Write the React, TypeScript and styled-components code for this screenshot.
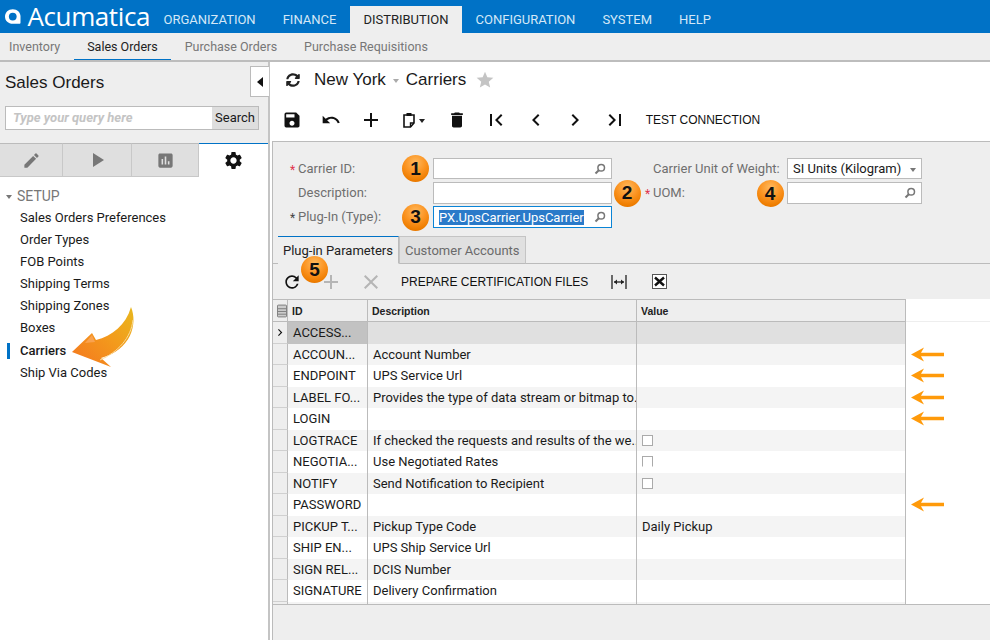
import styled, { createGlobalStyle } from "styled-components";
import {
    MdAdd,
    MdAssessment,
    MdChevronLeft,
    MdChevronRight,
    MdClose,
    MdDelete,
    MdEdit,
    MdFirstPage,
    MdLastPage,
    MdPlayArrow,
    MdRefresh,
    MdSave,
    MdSettings,
    MdStar,
    MdUndo,
} from "react-icons/md";
import { FaSyncAlt } from "react-icons/fa";

const COLORS = {
    blue: "#0072c6",
    panel: "#eeeeee",
    line: "#bbbbbb",
    text: "#1a1a1a",
    label: "#6f6f6f",
    stripe: "#f4f4f4",
};

const GlobalStyle = createGlobalStyle`
    * {
        box-sizing: border-box;
    }

    html, body {
        margin: 0;
        padding: 0;
        background: #fff;
        font-family: Roboto, "Liberation Sans", sans-serif;
        font-size: 13px;
        color: ${COLORS.text};
    }
`;

const Page = styled.div`
    position: relative;
    display: flex;
    flex-direction: column;
    width: 990px;
    height: 640px;
    overflow: hidden;
`;

const TopBar = styled.header`
    display: flex;
    align-items: flex-end;
    height: 33px;
    background: ${COLORS.blue};
`;

const LogoBox = styled.div`
    display: flex;
    align-items: center;
    gap: 7px;
    width: 150px;
    height: 33px;
    padding-left: 5px;
    color: #fff;
`;

const LogoText = styled.span`
    font-family: "Open Sans", sans-serif;
    font-size: 26px;
    line-height: 33px;
    letter-spacing: -0.4px;
`;

const TopTab = styled.div<{ $active?: boolean }>`
    display: flex;
    align-items: center;
    justify-content: center;
    height: 27px;
    padding: 0 13.5px;
    font-size: 13px;
    background: ${(p) => (p.$active ? COLORS.panel : "transparent")};
    color: ${(p) => (p.$active ? "#222" : "#d4e8f7")};
`;

const SubNav = styled.nav`
    display: flex;
    height: 29px;
    padding-left: 0;
    background: ${COLORS.panel};
    border-bottom: 2px solid #bdbdbd;
`;

const SubTab = styled.div<{ $active?: boolean; $first?: boolean }>`
    display: flex;
    align-items: center;
    height: 27px;
    padding: 0 13.5px;
    padding-left: ${(p) => (p.$first ? "9px" : "13.5px")};
    font-size: 12.5px;
    color: ${(p) => (p.$active ? "#222" : "#777")};
    border-bottom: ${(p) => (p.$active ? `1px solid ${COLORS.blue}` : "none")};
`;

const Body = styled.div`
    display: flex;
    flex: 1;
    min-height: 0;
`;

const Sidebar = styled.aside`
    position: relative;
    display: flex;
    flex-direction: column;
    width: 270px;
    border-right: 2px solid #c4c4c4;
`;

const SideHead = styled.div`
    display: flex;
    flex-direction: column;
    height: 81px;
    padding: 10px 9px 0 5px;
    background: ${COLORS.panel};
`;

const SideTitle = styled.div`
    height: 24px;
    font-family: "Liberation Sans", sans-serif;
    font-size: 17px;
    line-height: 22px;
`;

const SearchBox = styled.div`
    display: flex;
    height: 24px;
    margin-top: 10px;
    background: #fff;
    border: 1px solid ${COLORS.line};
`;

const SearchHint = styled.div`
    flex: 1;
    padding-left: 7px;
    font-size: 13px;
    font-style: italic;
    font-weight: 700;
    line-height: 22px;
    color: #c4c4c4;
`;

const SearchButton = styled.div`
    width: 46px;
    font-size: 13px;
    line-height: 22px;
    text-align: center;
    background: #dedede;
`;

const Collapse = styled.div`
    position: absolute;
    top: 4px;
    right: -1px;
    display: flex;
    align-items: center;
    justify-content: center;
    width: 19px;
    height: 31px;
    background: #fff;
    border: 1px solid ${COLORS.line};
    border-right: none;
`;

const CollapseArrow = styled.span`
    width: 0;
    height: 0;
    border-top: 5px solid transparent;
    border-bottom: 5px solid transparent;
    border-right: 6px solid #111;
`;

const ModeTabs = styled.div`
    display: flex;
    height: 34px;
    background: #fff;
`;

const ModeTab = styled.div<{ $active?: boolean; $width: number }>`
    display: flex;
    align-items: center;
    justify-content: center;
    width: ${(p) => p.$width}px;
    font-size: 19px;
    color: ${(p) => (p.$active ? "#111" : "#777")};
    background: ${(p) => (p.$active ? "#fff" : "#dfdfdf")};
    border-top: 1px solid ${(p) => (p.$active ? COLORS.blue : COLORS.line)};
    border-right: ${(p) => (p.$active ? "none" : `1px solid #c8c8c8`)};
    border-bottom: ${(p) => (p.$active ? "none" : `1px solid #c8c8c8`)};
`;

const MenuList = styled.div`
    display: flex;
    flex-direction: column;
    padding-top: 8px;
`;

const MenuGroup = styled.div`
    display: flex;
    align-items: center;
    gap: 5px;
    height: 22px;
    padding-left: 6px;
    font-size: 14px;
    color: #777;
`;

const Caret = styled.span<{ $color?: string }>`
    width: 0;
    height: 0;
    margin-top: 2px;
    border-left: 3.5px solid transparent;
    border-right: 3.5px solid transparent;
    border-top: 4px solid ${(p) => p.$color || "#777"};
`;

const MenuItem = styled.div<{ $active?: boolean }>`
    position: relative;
    height: 22.1px;
    padding-left: 20px;
    font-size: 13px;
    line-height: 22px;
    font-weight: ${(p) => (p.$active ? 500 : 400)};

    &::before {
        content: "";
        display: ${(p) => (p.$active ? "block" : "none")};
        position: absolute;
        left: 7px;
        top: 3px;
        width: 3px;
        height: 16px;
        background: ${COLORS.blue};
    }
`;

const Main = styled.main`
    display: flex;
    flex: 1;
    flex-direction: column;
    min-width: 0;
`;

const TitleBar = styled.div`
    display: flex;
    align-items: center;
    height: 36px;
    padding-left: 16px;
    font-family: "Liberation Sans", sans-serif;
    font-size: 17px;
`;

const SyncIcon = styled.span`
    display: flex;
    margin-right: 14px;
    font-size: 14px;
    color: #222;
`;

const StarIcon = styled.span`
    display: flex;
    margin-left: 9px;
    font-size: 20px;
    color: #c4c4c4;
`;

const Toolbar = styled.div`
    display: flex;
    align-items: center;
    height: 43px;
    padding-left: 2px;
`;

const ToolButton = styled.div<{ $width?: number; $muted?: boolean; $size?: number }>`
    display: flex;
    align-items: center;
    justify-content: center;
    gap: 4px;
    width: ${(p) => p.$width || 39.6}px;
    font-size: ${(p) => p.$size || 20}px;
    color: ${(p) => (p.$muted ? "#b5b5b5" : "#111")};
`;

const ToolText = styled.div`
    padding-left: 11px;
    font-family: "Liberation Sans", sans-serif;
    font-size: 12px;
    color: #111;
`;

const FormPanel = styled.section`
    display: flex;
    flex: 1;
    flex-direction: column;
    min-height: 0;
    margin-left: 2px;
    background: ${COLORS.panel};
    border-top: 1px solid ${COLORS.line};
    border-left: 1px solid ${COLORS.line};
`;

const FormGrid = styled.div`
    display: grid;
    grid-template-columns: 8px 135px 179px 33px 8px 134px 135px;
    grid-auto-rows: 22px;
    row-gap: 2px;
    height: 94px;
    padding: 16px 0 0 17px;
`;

const Req = styled.span<{ $dark?: boolean }>`
    font-size: 12px;
    line-height: 24px;
    color: ${(p) => (p.$dark ? "#444" : "#e0324b")};
`;

const Label = styled.label`
    font-size: 13px;
    line-height: 21px;
    color: ${COLORS.label};
`;

const InputBox = styled.div<{ $focus?: boolean; $short?: boolean }>`
    display: flex;
    align-items: center;
    justify-content: space-between;
    height: ${(p) => (p.$short ? "21px" : "22px")};
    padding: 0 5px;
    font-size: 13px;
    background: #fff;
    border: 1px solid ${(p) => (p.$focus ? "#0a84d6" : COLORS.line)};
`;

const Selected = styled.span`
    padding: 0 0 0 0;
    color: #fff;
    background: #2a7ac9;
`;

const Gap = styled.div``;

const TabStrip = styled.div`
    display: flex;
    height: 28px;
    padding-left: 5px;
    border-bottom: 1px solid ${COLORS.line};
`;

const PanelTab = styled.div<{ $active?: boolean }>`
    display: flex;
    align-items: center;
    height: 28px;
    padding: 0 5px;
    font-size: 13px;
    color: ${(p) => (p.$active ? "#222" : "#6a6a6a")};
    background: ${(p) => (p.$active ? COLORS.panel : "#e0e0e0")};
    border: 1px solid ${(p) => (p.$active ? COLORS.line : "#c4c4c4")};
    border-top: 1px solid ${(p) => (p.$active ? COLORS.blue : "#c4c4c4")};
    border-bottom: ${(p) => (p.$active ? `1px solid ${COLORS.panel}` : `1px solid ${COLORS.line}`)};
    border-left: ${(p) => (p.$active ? "none" : undefined)};
`;

const GridBar = styled.div`
    display: flex;
    align-items: center;
    height: 36px;
    padding-left: 0;
    border-bottom: 1px solid ${COLORS.line};
`;

const GridHead = styled.div`
    display: flex;
    width: 633px;
    height: 22px;
    border-bottom: 1px solid ${COLORS.line};
`;

const HeadCell = styled.div<{ $width: number }>`
    display: flex;
    align-items: center;
    width: ${(p) => p.$width}px;
    padding-left: 4px;
    font-family: "Liberation Sans", sans-serif;
    font-size: 10.5px;
    font-weight: 700;
    color: #222;
    border-right: 1px solid ${COLORS.line};
`;

const HeadWhite = styled.div`
    position: absolute;
    left: 906px;
    top: 299px;
    width: 84px;
    height: 22px;
    background: #fff;
`;

const GridBody = styled.div`
    display: flex;
    flex-direction: column;
    height: 283px;
    background: #fff;
    overflow: hidden;
    border-bottom: 1px solid ${COLORS.line};
`;

const Row = styled.div`
    display: flex;
    flex: none;
    height: 21.5px;
`;

const RowHead = styled.div`
    display: flex;
    align-items: center;
    justify-content: center;
    width: 15px;
    font-size: 15px;
    color: #111;
    background: ${COLORS.panel};
    border-right: 1px solid ${COLORS.line};
    border-bottom: 1px solid #d0d0d0;
`;

const Cell = styled.div<{ $width: number; $tone: string }>`
    display: flex;
    align-items: center;
    width: ${(p) => p.$width}px;
    padding-left: 5px;
    font-size: 13px;
    white-space: nowrap;
    overflow: hidden;
    background: ${(p) => p.$tone};
    border-right: 1px solid ${COLORS.line};
`;

const Check = styled.span<{ $open?: boolean }>`
    width: 11px;
    height: 11px;
    background: #fff;
    border: 1px solid #aaa;
    border-bottom-color: ${(p) => (p.$open ? "transparent" : "#aaa")};
`;

const RowHint = styled.div`
    display: flex;
    align-items: center;
    padding-left: 5px;
`;

const Badge = styled.div<{ $x: number; $y: number }>`
    position: absolute;
    left: ${(p) => p.$x - 13.5}px;
    top: ${(p) => p.$y - 13.5}px;
    display: flex;
    align-items: center;
    justify-content: center;
    width: 27px;
    height: 27px;
    font-family: "Liberation Sans", sans-serif;
    font-size: 19px;
    font-weight: 700;
    color: #111;
    border-radius: 50%;
    background: radial-gradient(circle at 50% 28%, #ffb95e 0%, #fb9320 45%, #ee7d00 75%, #d96c00 100%);
`;

const BigArrow = styled.svg`
    position: absolute;
    left: 70px;
    top: 305px;
    width: 68px;
    height: 64px;
`;

function SearchGlass() {
    return (
        <svg width="12" height="12" viewBox="0 0 12 12">
            <circle cx="7.2" cy="4.8" r="3.3" fill="none" stroke="#777" strokeWidth="1.5" />
            <path d="M4.8 7.2 L1.5 10.5" stroke="#777" strokeWidth="2" />
        </svg>
    );
}

function ClipboardIcon() {
    return (
        <svg width="12" height="16" viewBox="0 0 12 16">
            <path d="M1 3 H11 V11 L7.5 15 H1 Z" fill="none" stroke="#111" strokeWidth="1.6" />
            <path d="M3.5 1 H8.5 V4 H3.5 Z" fill="#111" />
            <path d="M7.5 15 V11 H11" fill="none" stroke="#111" strokeWidth="1.4" />
        </svg>
    );
}

function FitIcon() {
    return (
        <svg width="16" height="14" viewBox="0 0 16 14">
            <path d="M1 0 V14 M15 0 V14" stroke="#222" strokeWidth="1.3" />
            <path d="M3 7 H13" stroke="#222" strokeWidth="1.3" />
            <path d="M3 7 L6 4.5 V9.5 Z M13 7 L10 4.5 V9.5 Z" fill="#222" />
        </svg>
    );
}

function ExcelIcon() {
    return (
        <svg width="15" height="15" viewBox="0 0 15 15">
            <rect x="0.5" y="0.5" width="14" height="14" fill="#fff" stroke="#555" />
            <path d="M3 3.5 L12 11.5 M12 3.5 L3 11.5" stroke="#111" strokeWidth="2.4" />
        </svg>
    );
}

function ColumnsIcon() {
    return (
        <svg width="11" height="14" viewBox="0 0 11 14">
            <rect x="0.5" y="0.5" width="10" height="13" rx="1" fill="#ccc" stroke="#777" />
            <path d="M1 4.5 H10 M1 7.5 H10 M1 10.5 H10" stroke="#777" />
        </svg>
    );
}

function HintArrow() {
    return (
        <svg width="33" height="15" viewBox="0 0 33 15">
            <path d="M0 7.5 L13 0.5 L10 5.8 H33 V9.2 H10 L13 14.5 Z" fill="#ff9a0a" />
        </svg>
    );
}

function LogoMark() {
    return (
        <svg width="20" height="19" viewBox="0 0 20 19">
            <path
                d="M10 0 C15.8 0 20 4 20 9.5 V17.5 C20 18.3 19.4 19 18.5 19 H10 C4.2 19 0 14.8 0 9.5 C0 4 4.2 0 10 0 Z"
                fill="#fff"
            />
            <circle cx="10" cy="9.5" r="5" fill="#0072c6" />
        </svg>
    );
}

const ROWS: { id: string; desc?: string; value?: string; check?: "full" | "open"; hint?: boolean }[] = [
    { id: "ACCESS..." },
    { id: "ACCOUN...", desc: "Account Number", hint: true },
    { id: "ENDPOINT", desc: "UPS Service Url", hint: true },
    { id: "LABEL FO...", desc: "Provides the type of data stream or bitmap to...", hint: true },
    { id: "LOGIN", hint: true },
    { id: "LOGTRACE", desc: "If checked the requests and results of the we...", check: "full" },
    { id: "NEGOTIA...", desc: "Use Negotiated Rates", check: "open" },
    { id: "NOTIFY", desc: "Send Notification to Recipient", check: "full" },
    { id: "PASSWORD", hint: true },
    { id: "PICKUP T...", desc: "Pickup Type Code", value: "Daily Pickup" },
    { id: "SHIP EN...", desc: "UPS Ship Service Url" },
    { id: "SIGN REL...", desc: "DCIS Number" },
    { id: "SIGNATURE", desc: "Delivery Confirmation" },
    { id: "" },
];

const MENU = [
    "Sales Orders Preferences",
    "Order Types",
    "FOB Points",
    "Shipping Terms",
    "Shipping Zones",
    "Boxes",
    "Carriers",
    "Ship Via Codes",
];

function rowTone(index: number) {
    if (index === 0) return "#e0e0e0";
    return index % 2 === 1 ? COLORS.stripe : "#fff";
}

export default function App() {
    return (
        <Page>
            <GlobalStyle />
            <TopBar>
                <LogoBox>
                    <LogoMark />
                    <LogoText>Acumatica</LogoText>
                </LogoBox>
                <TopTab>ORGANIZATION</TopTab>
                <TopTab>FINANCE</TopTab>
                <TopTab $active>DISTRIBUTION</TopTab>
                <TopTab>CONFIGURATION</TopTab>
                <TopTab>SYSTEM</TopTab>
                <TopTab>HELP</TopTab>
            </TopBar>
            <SubNav>
                <SubTab $first>Inventory</SubTab>
                <SubTab $active>Sales Orders</SubTab>
                <SubTab>Purchase Orders</SubTab>
                <SubTab>Purchase Requisitions</SubTab>
            </SubNav>
            <Body>
                <Sidebar>
                    <SideHead>
                        <SideTitle>Sales Orders</SideTitle>
                        <SearchBox>
                            <SearchHint>Type your query here</SearchHint>
                            <SearchButton>Search</SearchButton>
                        </SearchBox>
                    </SideHead>
                    <Collapse>
                        <CollapseArrow />
                    </Collapse>
                    <ModeTabs>
                        <ModeTab $width={63}>
                            <MdEdit />
                        </ModeTab>
                        <ModeTab $width={69}>
                            <MdPlayArrow size={24} />
                        </ModeTab>
                        <ModeTab $width={67}>
                            <MdAssessment />
                        </ModeTab>
                        <ModeTab $width={69} $active>
                            <MdSettings size={21} />
                        </ModeTab>
                    </ModeTabs>
                    <MenuList>
                        <MenuGroup>
                            <Caret />
                            SETUP
                        </MenuGroup>
                        {MENU.map((item) => (
                            <MenuItem key={item} $active={item === "Carriers"}>
                                {item}
                            </MenuItem>
                        ))}
                    </MenuList>
                </Sidebar>
                <Main>
                    <TitleBar>
                        <SyncIcon>
                            <FaSyncAlt />
                        </SyncIcon>
                        New York
                        <Caret $color="#aaa" style={{ margin: "2px 7px 0" }} />
                        Carriers
                        <StarIcon>
                            <MdStar />
                        </StarIcon>
                    </TitleBar>
                    <Toolbar>
                        <ToolButton>
                            <MdSave />
                        </ToolButton>
                        <ToolButton>
                            <MdUndo />
                        </ToolButton>
                        <ToolButton $size={24}>
                            <MdAdd />
                        </ToolButton>
                        <ToolButton $width={46}>
                            <ClipboardIcon />
                            <Caret $color="#222" />
                        </ToolButton>
                        <ToolButton>
                            <MdDelete />
                        </ToolButton>
                        <ToolButton $size={24}>
                            <MdFirstPage />
                        </ToolButton>
                        <ToolButton $size={24}>
                            <MdChevronLeft />
                        </ToolButton>
                        <ToolButton $size={24}>
                            <MdChevronRight />
                        </ToolButton>
                        <ToolButton $size={24}>
                            <MdLastPage />
                        </ToolButton>
                        <ToolText>TEST CONNECTION</ToolText>
                    </Toolbar>
                    <FormPanel>
                        <FormGrid>
                            <Req>*</Req>
                            <Label>Carrier ID:</Label>
                            <InputBox $short>
                                <span />
                                <SearchGlass />
                            </InputBox>
                            <Gap />
                            <Gap />
                            <Label>Carrier Unit of Weight:</Label>
                            <InputBox $short>
                                SI Units (Kilogram)
                                <Caret />
                            </InputBox>

                            <Gap />
                            <Label>Description:</Label>
                            <InputBox />
                            <Gap />
                            <Req>*</Req>
                            <Label>UOM:</Label>
                            <InputBox>
                                <span />
                                <SearchGlass />
                            </InputBox>

                            <Req $dark>*</Req>
                            <Label>Plug-In (Type):</Label>
                            <InputBox $focus>
                                <Selected>PX.UpsCarrier.UpsCarrier</Selected>
                                <SearchGlass />
                            </InputBox>
                        </FormGrid>
                        <TabStrip>
                            <PanelTab $active>Plug-in Parameters</PanelTab>
                            <PanelTab>Customer Accounts</PanelTab>
                        </TabStrip>
                        <GridBar>
                            <ToolButton $width={38}>
                                <MdRefresh />
                            </ToolButton>
                            <ToolButton $width={40} $muted $size={24}>
                                <MdAdd />
                            </ToolButton>
                            <ToolButton $width={39} $muted $size={24}>
                                <MdClose />
                            </ToolButton>
                            <ToolText style={{ paddingLeft: 11 }}>PREPARE CERTIFICATION FILES</ToolText>
                            <ToolButton $width={62}>
                                <FitIcon />
                            </ToolButton>
                            <ToolButton $width={18}>
                                <ExcelIcon />
                            </ToolButton>
                        </GridBar>
                        <GridHead>
                            <HeadCell $width={15}>
                                <ColumnsIcon />
                            </HeadCell>
                            <HeadCell $width={80}>ID</HeadCell>
                            <HeadCell $width={269}>Description</HeadCell>
                            <HeadCell $width={269}>Value</HeadCell>
                        </GridHead>
                        <GridBody>
                            {ROWS.map((row, index) => (
                                <Row key={index}>
                                    <RowHead>{index === 0 && <MdChevronRight />}</RowHead>
                                    <Cell $width={80} $tone={index === 0 ? "#c2c2c2" : rowTone(index)}>
                                        {row.id}
                                    </Cell>
                                    <Cell $width={269} $tone={rowTone(index)}>
                                        {row.desc}
                                    </Cell>
                                    <Cell $width={269} $tone={rowTone(index)}>
                                        {row.value}
                                        {row.check && <Check $open={row.check === "open"} />}
                                    </Cell>
                                    {row.hint && (
                                        <RowHint>
                                            <HintArrow />
                                        </RowHint>
                                    )}
                                </Row>
                            ))}
                        </GridBody>
                    </FormPanel>
                </Main>
            </Body>
            <HeadWhite />
            <Badge $x={415.5} $y={168.5}>1</Badge>
            <Badge $x={627} $y={193}>2</Badge>
            <Badge $x={415.5} $y={217}>3</Badge>
            <Badge $x={770} $y={193.5}>4</Badge>
            <Badge $x={314.5} $y={269.5}>5</Badge>
            <BigArrow viewBox="70 305 68 64">
                <defs>
                    <linearGradient id="bigArrowFill" x1="1" y1="0" x2="0" y2="1">
                        <stop offset="0" stopColor="#e8b81e" />
                        <stop offset="0.45" stopColor="#f39a1c" />
                        <stop offset="1" stopColor="#f4761f" />
                    </linearGradient>
                </defs>
                <path
                    d="M72 352 L92 333 L96 340 C112 336 126 325 131 307 C138 324 131 350 101 358 L111 367 Z"
                    fill="url(#bigArrowFill)"
                />
                <path d="M133 320 C131 338 118 352 100 360" fill="none" stroke="#fbdc9a" strokeWidth="1" />
                <path d="M92 335 L95 342 L85 343 Z" fill="#f9a24f" />
            </BigArrow>
        </Page>
    );
}
